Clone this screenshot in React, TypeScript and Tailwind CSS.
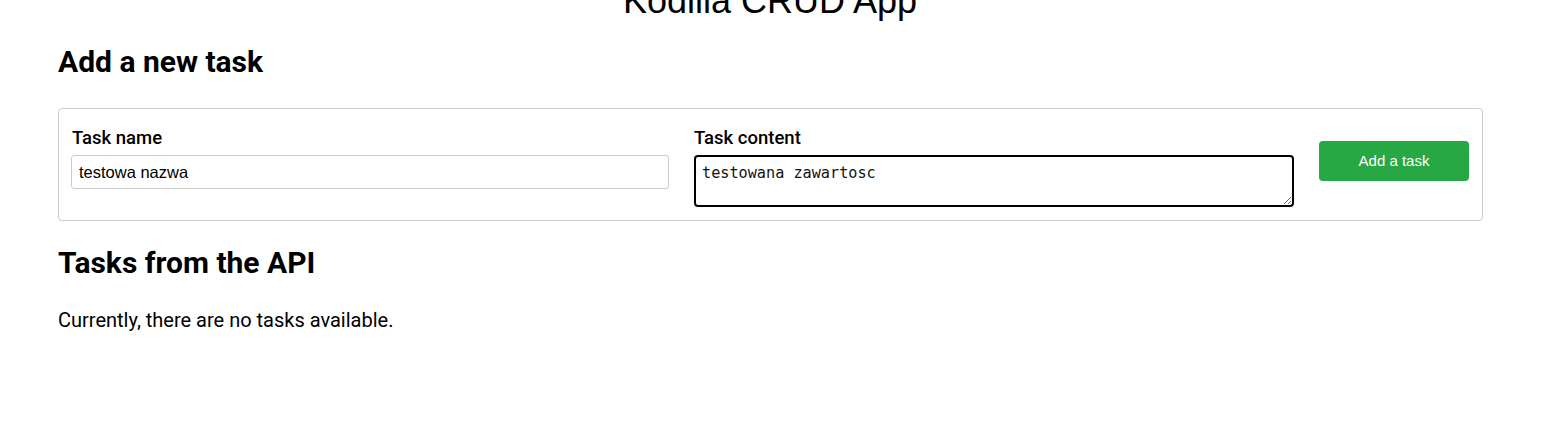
import React from "react";

const App: React.FC = () => {
  return (
    <div className="min-h-screen bg-white text-black overflow-hidden" style={{ fontFamily: "Roboto, 'Noto Sans', sans-serif" }}>
      <h1 className="w-[1540px] text-center text-[36px] leading-[44px] -mt-[21px] font-normal text-black" style={{ fontFamily: "'Liberation Sans', Arial, sans-serif" }}>
        Kodilla CRUD App
      </h1>

      <main className="mx-[58px] w-[1425px]">
        <h2 className="mt-[21px] text-[30px] leading-[36px] font-bold">Add a new task</h2>

        <form className="mt-[28px] flex items-start gap-[25px] rounded border border-[#cccccc] pl-[12px] pr-[13px] pt-[17px] pb-[13px]">
          <div className="flex min-w-0 flex-[598] flex-col">
            <label className="text-[18.5px] leading-[24px] font-medium mb-[5px] pl-px">Task name</label>
            <input
              type="text"
              defaultValue="testowa nazwa"
              className="h-[34px] w-full rounded-[3px] border border-[#cccccc] px-[7px] text-[16.5px] outline-none"
              style={{ fontFamily: "'Liberation Sans', Arial, sans-serif" }}
            />
          </div>
          <div className="flex min-w-0 flex-[600] flex-col">
            <label className="text-[18.5px] leading-[24px] font-medium mb-[5px]">Task content</label>
            <textarea
              defaultValue="testowana zawartosc"
              spellCheck
              className="h-[52px] w-full rounded-[4px] border-2 border-black px-[6px] pt-[7px] pb-[5px] text-[15.2px] leading-[18px] text-[#111] outline-none resize-y"
              style={{ fontFamily: "'DejaVu Sans Mono', 'Liberation Mono', monospace" }}
            />
          </div>
          <button
            type="button"
            className="mt-[15px] h-[40px] w-[150px] shrink-0 rounded bg-[#28a745] text-[15px] text-white"
            style={{ fontFamily: "'Liberation Sans', Arial, sans-serif" }}
          >
            Add a task
          </button>
        </form>

        <h2 className="mt-[24px] text-[30px] leading-[36px] font-bold">Tasks from the API</h2>
        <p className="mt-[27px] text-[20px] leading-[24px]">Currently, there are no tasks available.</p>
      </main>
    </div>
  );
};

export default App;
